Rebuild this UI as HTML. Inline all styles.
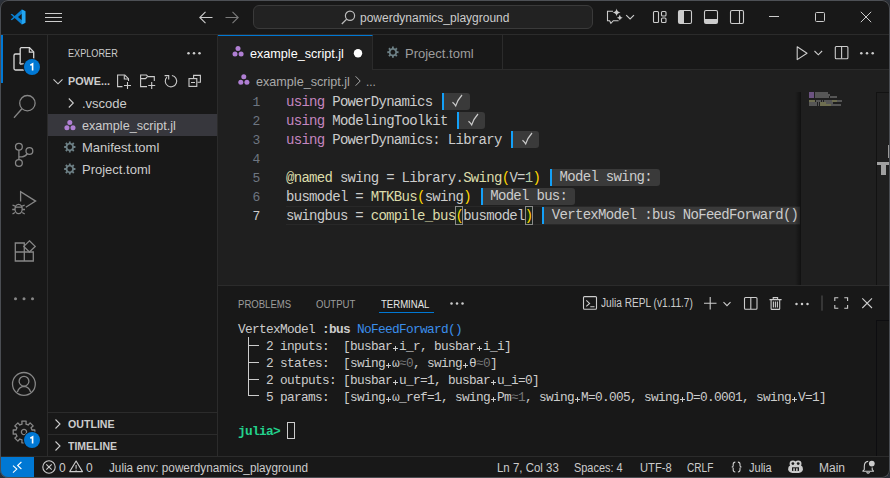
<!DOCTYPE html>
<html><head><meta charset="utf-8">
<style>
html,body{margin:0;padding:0;width:890px;height:478px;overflow:hidden;background:#2b3038;}
*{box-sizing:border-box}
.a{position:absolute}
#win{position:absolute;left:0;top:0;width:890px;height:478px;border-radius:8px;background:#181818;overflow:hidden;font-family:"Liberation Sans",sans-serif;color:#cccccc;}
#frame{position:absolute;left:0;top:0;width:890px;height:478px;border-radius:8px;border:1px solid #4d5055;border-left-color:#4a4d52;border-right-color:#4a4d52;border-bottom-color:#4a4d52;pointer-events:none;}
.ui{position:absolute;font-family:"Liberation Sans",sans-serif;white-space:nowrap;line-height:1;transform-origin:0 0;}
svg{position:absolute;overflow:visible}
.ic{fill:none;stroke:#cccccc;stroke-width:1.1}
.ia{fill:none;stroke:#868686;stroke-width:1.3}
.ed{font-family:"Liberation Mono",monospace;font-size:14px;letter-spacing:-0.7px;line-height:19px;white-space:pre;color:#cccccc;}
.kw{color:#c586c0}
.fn{color:#dcdcaa}
.br{color:#ffd700}
.res{display:inline-block;background:#3a3a3a;border-left:2px solid #13a0f8;height:17px;line-height:17px;vertical-align:top;margin-top:0px;margin-left:9.7px;border-radius:0 3px 3px 0;color:#cccccc}
.ck{display:inline-block;width:26px;height:17px;position:relative}
.term{font-family:"Liberation Mono",monospace;font-size:12.8px;letter-spacing:-0.68px;line-height:17px;white-space:pre;color:#cccccc;}
.sp{display:inline-block;width:7px;height:17px;vertical-align:top;letter-spacing:0;background:linear-gradient(#cccccc,#cccccc) 1px 10px/5px 1px no-repeat,linear-gradient(#cccccc,#cccccc) 3px 8px/1px 5px no-repeat;}
.dim{color:#767676}
.blue{color:#3b8eea}
.grn{color:#23d18b;font-weight:bold}
.sb{font-size:12px;top:462px;color:#cccccc}
</style></head><body>
<div id="win">
  <!-- ============ title bar ============ -->
  <div class="a" style="left:0;top:0;width:890px;height:35px;background:#181818;border-bottom:1px solid #2b2b2b"></div>
  <svg style="left:10px;top:9px" width="16" height="16" viewBox="0 0 100 100">
    <path fill="#0a7fd0" fill-rule="evenodd" d="M74 3 L96 14 V86 L74 97 L29 57 L12 70 L4 65 L22 50 L4 35 L12 30 L29 43 Z M74 29 L50 50 L74 71 Z"/>
    <path fill="#23a6f2" d="M74 3 L96 14 V86 L74 97 Z"/>
  </svg>
  <div class="a" style="left:45px;top:13px;width:17px;height:1px;background:#cccccc"></div>
  <div class="a" style="left:45px;top:17px;width:17px;height:1px;background:#cccccc"></div>
  <div class="a" style="left:45px;top:21px;width:17px;height:1px;background:#cccccc"></div>
  <svg style="left:199px;top:11px" width="14" height="13" viewBox="0 0 14 13"><path d="M13.5 6.5H0.8M6.5 0.8L0.8 6.5L6.5 12.2" fill="none" stroke="#cccccc" stroke-width="1.1"/></svg>
  <svg style="left:225px;top:11px" width="14" height="13" viewBox="0 0 14 13"><path d="M0.5 6.5H13.2M7.5 0.8L13.2 6.5L7.5 12.2" fill="none" stroke="#7a7a7a" stroke-width="1.1"/></svg>
  <div class="a" style="left:253px;top:5px;width:340px;height:24px;border:1px solid #3a3a3a;border-radius:6px;background:#222222"></div>
  <svg style="left:341px;top:10px" width="15" height="15" viewBox="0 0 15 15"><circle cx="9" cy="5.8" r="4.6" fill="none" stroke="#bbbbbb" stroke-width="1.2"/><path d="M5.7 9.1L0.8 14" stroke="#bbbbbb" stroke-width="1.3"/></svg>
  <div class="ui" style="left:360px;top:12px;font-size:12px;color:#cccccc">powerdynamics_playground</div>

  <svg style="left:0;top:0" width="890" height="35" viewBox="0 0 890 35">
    <path d="M613 11.3H607.5V20.7H609.6L610.9 23.3L613.3 20.7H618.6" class="ic" stroke-width="1.1"/>
    <path d="M616.6 8.5Q617.068 11.932 620.5 12.4Q617.068 12.868 616.6 16.3Q616.1320000000001 12.868 612.7 12.4Q616.1320000000001 11.932 616.6 8.5Z" fill="#cccccc"/>
    <path d="M619.8 14.799999999999999Q620.1479999999999 17.352 622.6999999999999 17.7Q620.1479999999999 18.048 619.8 20.599999999999998Q619.452 18.048 616.9 17.7Q619.452 17.352 619.8 14.799999999999999Z" fill="#cccccc"/>
    <path d="M626.2 15.2L630.1 19L634 15.2" class="ic" stroke-width="1.1"/>
  </svg>
  <svg style="left:0;top:0" width="890" height="35" viewBox="0 0 890 35">
    <rect x="653.5" y="11.5" width="5" height="11" rx="1" class="ic" stroke-width="1"/>
    <rect x="661.5" y="11.5" width="4.5" height="4.5" rx="1" class="ic" stroke-width="1"/>
    <rect x="661.5" y="18" width="4.5" height="4.5" rx="1" class="ic" stroke-width="1"/>
    <rect x="678.5" y="10.5" width="13" height="13" rx="1.5" class="ic" stroke-width="1"/>
    <rect x="679" y="11" width="5" height="12" fill="#cccccc"/>
    <rect x="704.5" y="10.5" width="13" height="13" rx="1.5" class="ic" stroke-width="1"/>
    <rect x="705" y="19" width="12" height="4" fill="#cccccc"/>
    <rect x="730.5" y="10.5" width="13" height="13" rx="1.5" class="ic" stroke-width="1"/>
    <path d="M739.5 11V23" class="ic" stroke-width="1"/>
  </svg>
  <div class="a" style="left:769px;top:16px;width:10px;height:1px;background:#cccccc"></div>
  <div class="a" style="left:815px;top:12px;width:10px;height:10px;border:1px solid #cccccc;border-radius:1.5px"></div>
  <svg style="left:860px;top:11px" width="12" height="12" viewBox="0 0 12 12"><path d="M0.8 0.8L11.2 11.2M11.2 0.8L0.8 11.2" stroke="#cccccc" stroke-width="1"/></svg>

  <!-- ============ activity bar ============ -->
  <div class="a" style="left:0;top:35px;width:48px;height:422px;background:#181818;border-right:1px solid #2b2b2b"></div>
  <div class="a" style="left:1px;top:35px;width:2px;height:48px;background:#0078d4"></div>
  <svg style="left:0;top:0" width="48" height="460" viewBox="0 0 48 460">
    <!-- explorer -->
    <path d="M20 54H15.5A1.5 1.5 0 0 0 14 55.5V68.5A1.5 1.5 0 0 0 15.5 70H25" fill="none" stroke="#d7d7d7" stroke-width="1.3"/>
    <path d="M24.5 63.8H21.7A1 1 0 0 1 20.2 62.3V49.3A1.3 1.3 0 0 1 21.5 47.7H29.5L33.7 51.9V60" fill="none" stroke="#d7d7d7" stroke-width="1.3"/>
    <path d="M29.3 47.9V52.1H33.5" fill="none" stroke="#d7d7d7" stroke-width="1.1"/>
    <circle cx="32" cy="67" r="9" fill="#181818"/>
    <circle cx="32" cy="67" r="8" fill="#0078d4"/>
    <path d="M30.3 65.2L32.6 63.9V70.6" fill="none" stroke="#ffffff" stroke-width="1.6"/>
    <!-- search -->
    <circle cx="27.4" cy="103.2" r="7.7" class="ia"/>
    <path d="M21.9 108.7L14 117.8" class="ia" stroke-width="1.5"/>
    <!-- scm -->
    <circle cx="18.9" cy="146.7" r="3.4" class="ia"/>
    <circle cx="18.9" cy="163" r="3.4" class="ia"/>
    <circle cx="29.4" cy="151" r="3.4" class="ia"/>
    <path d="M18.9 150.1V159.6M27.2 153.6Q25.5 156.5 22 156.8H19" class="ia"/>
    <!-- debug -->
    <path d="M20.6 201.5V191.6L35.6 201.1L25.8 207.3" class="ia"/>
    <ellipse cx="18.6" cy="209" rx="3.6" ry="4.6" class="ia"/>
    <path d="M15 207.2H22.2M12.5 205L15 206.2M24.7 205L22.2 206.2M12.2 209.5H15M25 209.5H22.2M12.5 214L15 212.5M24.7 214L22.2 212.5" class="ia" stroke-width="1.1"/>
    <!-- extensions -->
    <path d="M15.3 243H24.3V252H33.3V261H15.3ZM15.3 252H24.3V261" class="ia"/>
    <path d="M29.4 240.8L35.2 246.4L29.4 252L23.8 246.4Z" class="ia"/>
    <!-- more -->
    <circle cx="15.5" cy="298.8" r="1.5" fill="#868686"/><circle cx="24" cy="298.8" r="1.5" fill="#868686"/><circle cx="32.5" cy="298.8" r="1.5" fill="#868686"/>
    <!-- account -->
    <circle cx="23.9" cy="383.9" r="11.4" class="ia"/>
    <circle cx="24" cy="381.2" r="4.9" class="ia"/>
    <path d="M17.4 392Q19 386.6 24 386.4Q29 386.6 30.6 392" class="ia"/>
    <!-- gear -->
    <g transform="translate(24 432)">
      <path d="M-1.98 -7.96 L-2.15 -10.79 L2.15 -10.79 L1.98 -7.96 L4.23 -7.03 L6.11 -9.15 L9.15 -6.11 L7.03 -4.23 L7.96 -1.98 L10.79 -2.15 L10.79 2.15 L7.96 1.98 L7.03 4.23 L9.15 6.11 L6.11 9.15 L4.23 7.03 L1.98 7.96 L2.15 10.79 L-2.15 10.79 L-1.98 7.96 L-4.23 7.03 L-6.11 9.15 L-9.15 6.11 L-7.03 4.23 L-7.96 1.98 L-10.79 2.15 L-10.79 -2.15 L-7.96 -1.98 L-7.03 -4.23 L-9.15 -6.11 L-6.11 -9.15 L-4.23 -7.03Z" class="ia" stroke-width="1.5" stroke-linejoin="round"/>
      <circle cx="0" cy="0" r="2.6" class="ia" stroke-width="1.4"/>
    </g>
    <circle cx="32" cy="440" r="9" fill="#181818"/>
    <circle cx="32" cy="440" r="8" fill="#0078d4"/>
    <path d="M30.3 438.2L32.6 436.9V443.6" fill="none" stroke="#ffffff" stroke-width="1.6"/>
  </svg>

  <!-- ============ sidebar ============ -->
  <div class="a" style="left:48px;top:35px;width:170px;height:422px;background:#181818;border-right:1px solid #2b2b2b"></div>
  <div class="ui" style="left:68px;top:48px;font-size:11px;color:#cccccc;transform:scaleX(0.83)">EXPLORER</div>
  <svg style="left:0;top:0" width="218" height="200" viewBox="0 0 218 200">
    <circle cx="188.5" cy="53.3" r="1.25" fill="#cccccc"/><circle cx="194" cy="53.3" r="1.25" fill="#cccccc"/><circle cx="199.5" cy="53.3" r="1.25" fill="#cccccc"/>
    <path d="M53.5 79.3L58 83.8L62.5 79.3" class="ic"/>
    <!-- new file -->
    <path d="M122.5 86.6H117.6V75H124.8L128.5 78.7V81" class="ic"/>
    <path d="M124.3 75.2V79H128.2M127.5 82V89M124 85.5H131" class="ic"/>
    <!-- new folder -->
    <path d="M147 86.6H140.6V75H146.5L148 76.6H154.3V81" class="ic"/>
    <path d="M140.8 78.6H145.5L147.2 77M151.7 82V89M148.2 85.5H155.2" class="ic"/>
    <!-- refresh -->
    <path d="M166.9 77.1A5.7 5.7 0 1 0 171.9 75.5" class="ic"/>
    <path d="M164.6 75.6H168.7V79.6" class="ic"/>
    <!-- collapse -->
    <path d="M193.6 78V75.4H200.4V82.2H197.5" class="ic"/>
    <rect x="189" y="78.6" width="7.8" height="7.8" class="ic"/>
    <path d="M191 82.5H195" class="ic"/>
    <!-- vscode chevron -->
    <path d="M68.8 98.5L73.3 103L68.8 107.5" class="ic"/>
    <!-- julia -->
    <circle cx="69.8" cy="122.4" r="2.5" fill="#b07fd4"/><circle cx="66.9" cy="127.7" r="2.5" fill="#b07fd4"/><circle cx="73" cy="127.7" r="2.5" fill="#b07fd4"/>
  </svg>
  <div class="a" style="left:48px;top:114px;width:169px;height:22px;background:#37373d"></div>
  <svg style="left:0;top:0" width="218" height="200" viewBox="0 0 218 200">
    <circle cx="69.8" cy="122.4" r="2.5" fill="#b07fd4"/><circle cx="66.9" cy="127.7" r="2.5" fill="#b07fd4"/><circle cx="73" cy="127.7" r="2.5" fill="#b07fd4"/>
    <path transform="translate(69.8 147)" fill="#6d8086" fill-rule="evenodd" d="M-0.88 -4.11 L-0.94 -5.62 L0.94 -5.62 L0.88 -4.11 L2.28 -3.53 L3.31 -4.64 L4.64 -3.31 L3.53 -2.28 L4.11 -0.88 L5.62 -0.94 L5.62 0.94 L4.11 0.88 L3.53 2.28 L4.64 3.31 L3.31 4.64 L2.28 3.53 L0.88 4.11 L0.94 5.62 L-0.94 5.62 L-0.88 4.11 L-2.28 3.53 L-3.31 4.64 L-4.64 3.31 L-3.53 2.28 L-4.11 0.88 L-5.62 0.94 L-5.62 -0.94 L-4.11 -0.88 L-3.53 -2.28 L-4.64 -3.31 L-3.31 -4.64 L-2.28 -3.53Z M0 -2.4A2.4 2.4 0 1 0 0.001 -2.4Z"/><path transform="translate(69.8 169)" fill="#6d8086" fill-rule="evenodd" d="M-0.88 -4.11 L-0.94 -5.62 L0.94 -5.62 L0.88 -4.11 L2.28 -3.53 L3.31 -4.64 L4.64 -3.31 L3.53 -2.28 L4.11 -0.88 L5.62 -0.94 L5.62 0.94 L4.11 0.88 L3.53 2.28 L4.64 3.31 L3.31 4.64 L2.28 3.53 L0.88 4.11 L0.94 5.62 L-0.94 5.62 L-0.88 4.11 L-2.28 3.53 L-3.31 4.64 L-4.64 3.31 L-3.53 2.28 L-4.11 0.88 L-5.62 0.94 L-5.62 -0.94 L-4.11 -0.88 L-3.53 -2.28 L-4.64 -3.31 L-3.31 -4.64 L-2.28 -3.53Z M0 -2.4A2.4 2.4 0 1 0 0.001 -2.4Z"/>
  </svg>
  <div class="ui" style="left:68px;top:76px;font-size:11px;font-weight:bold;color:#cccccc;transform:scaleX(0.98)">POWE...</div>
  <div class="ui" style="left:82px;top:97px;font-size:13px">.vscode</div>
  <div class="ui" style="left:82px;top:119px;font-size:13px;transform:scaleX(0.97)">example_script.jl</div>
  <div class="ui" style="left:82px;top:141px;font-size:13px">Manifest.toml</div>
  <div class="ui" style="left:82px;top:163px;font-size:13px">Project.toml</div>
  <div class="a" style="left:48px;top:412px;width:169px;height:1px;background:#2b2b2b"></div>
  <div class="a" style="left:48px;top:434px;width:169px;height:1px;background:#2b2b2b"></div>
  <svg style="left:0;top:400px" width="218" height="60" viewBox="0 400 218 60">
    <path d="M55.5 419.5L60 424L55.5 428.5M55.5 441.5L60 446L55.5 450.5" class="ic"/>
  </svg>
  <div class="ui" style="left:68px;top:419px;font-size:11px;font-weight:bold;transform:scaleX(0.965)">OUTLINE</div>
  <div class="ui" style="left:68px;top:441px;font-size:11px;font-weight:bold;transform:scaleX(0.955)">TIMELINE</div>

  <!-- ============ editor ============ -->
  <div class="a" style="left:218px;top:35px;width:672px;height:250px;background:#1f1f1f"></div>
  <div class="a" style="left:218px;top:35px;width:672px;height:35px;background:#181818;border-bottom:1px solid #2b2b2b"></div>
  <div class="a" style="left:218px;top:35px;width:155px;height:35px;background:#1f1f1f;border-top:1px solid #0078d4;border-right:1px solid #2b2b2b"></div>
  <div class="a" style="left:373px;top:35px;width:130px;height:34px;border-right:1px solid #2b2b2b"></div>
  <svg style="left:0;top:0" width="890" height="100" viewBox="0 0 890 100">
    <circle cx="238" cy="48.6" r="2.5" fill="#b07fd4"/><circle cx="235" cy="54" r="2.5" fill="#b07fd4"/><circle cx="241.1" cy="54" r="2.5" fill="#b07fd4"/>
    <circle cx="358" cy="53.2" r="4.2" fill="#ffffff"/>
    <path transform="translate(392.9 52.2)" fill="#6d8086" fill-rule="evenodd" d="M-0.88 -4.11 L-0.94 -5.62 L0.94 -5.62 L0.88 -4.11 L2.28 -3.53 L3.31 -4.64 L4.64 -3.31 L3.53 -2.28 L4.11 -0.88 L5.62 -0.94 L5.62 0.94 L4.11 0.88 L3.53 2.28 L4.64 3.31 L3.31 4.64 L2.28 3.53 L0.88 4.11 L0.94 5.62 L-0.94 5.62 L-0.88 4.11 L-2.28 3.53 L-3.31 4.64 L-4.64 3.31 L-3.53 2.28 L-4.11 0.88 L-5.62 0.94 L-5.62 -0.94 L-4.11 -0.88 L-3.53 -2.28 L-4.64 -3.31 L-3.31 -4.64 L-2.28 -3.53Z M0 -2.4A2.4 2.4 0 1 0 0.001 -2.4Z"/>
    <circle cx="243.8" cy="76.8" r="2.5" fill="#b07fd4"/><circle cx="240.8" cy="82.2" r="2.5" fill="#b07fd4"/><circle cx="246.9" cy="82.2" r="2.5" fill="#b07fd4"/>
    <path d="M355.6 76.3L360.2 81L355.6 85.7" fill="none" stroke="#a9a9a9" stroke-width="1"/>
    <!-- run / split / more -->
    <path d="M797.2 46.8V59.6L807 53.2Z" class="ic" stroke-linejoin="round"/>
    <path d="M814.5 51L818.3 54.8L822.1 51" class="ic"/>
    <rect x="835.3" y="46.5" width="12.6" height="12.3" rx="1" class="ic"/>
    <path d="M841.6 46.8V58.6" class="ic"/>
    <circle cx="861.3" cy="53.2" r="1.25" fill="#cccccc"/><circle cx="867" cy="53.2" r="1.25" fill="#cccccc"/><circle cx="872.7" cy="53.2" r="1.25" fill="#cccccc"/>
  </svg>
  <div class="ui" style="left:250px;top:47px;font-size:13px;color:#ffffff;transform:scaleX(0.97)">example_script.jl</div>
  <div class="ui" style="left:405px;top:47px;font-size:13px;color:#9d9d9d">Project.toml</div>
  <div class="ui" style="left:256px;top:75px;font-size:13px;color:#a9a9a9;transform:scaleX(0.97)">example_script.jl</div>
  <div class="ui" style="left:366px;top:75px;font-size:13px;color:#a9a9a9;transform:scaleX(0.9)">...</div>

  <!-- line numbers -->
  <div class="a ed" style="left:240px;top:92.5px;width:20px;text-align:right;color:#6e7681;font-size:13px;letter-spacing:-0.4px">1
2
3
4
5
6
<span style="color:#cccccc">7</span></div>
  <div class="a" style="left:286px;top:206px;width:514px;height:19px;border:1px solid #282828;border-left:none;border-right:none"></div>
  <div class="a" style="left:455px;top:206px;width:8px;height:19px;border:1px solid #8a8a8a;background:rgba(0,100,0,0.1)"></div>
  <div class="a" style="left:525px;top:206px;width:8px;height:19px;border:1px solid #8a8a8a;background:rgba(0,100,0,0.1)"></div>
  <div class="a ed" style="left:286px;top:93px"><span class="kw">using</span> PowerDynamics<span class="res"><span class="ck"></span></span>
<span class="kw">using</span> ModelingToolkit<span class="res"><span class="ck"></span></span>
<span class="kw">using</span> PowerDynamics: Library<span class="res"><span class="ck"></span></span>

<span class="fn">@named</span> swing = Library.<span class="fn">Swing</span><span class="br">(</span>V=<span style="color:#b5cea8">1</span><span class="br">)</span><span class="res"> Model swing: </span>
busmodel = <span class="fn">MTKBus</span><span class="br">(</span>swing<span class="br">)</span><span class="res"> Model bus: </span>
swingbus = <span class="fn">compile_bus</span><span class="br">(</span>busmodel<span class="br">)</span><span class="res"> VertexModel :bus NoFeedForward() </span></div>
  <svg style="left:0;top:0" width="890" height="200" viewBox="0 0 890 200">
    <path d="M452.5 102.3Q454.3 103.8 455.7 105.9Q457.5 100 462.0 95" fill="none" stroke="#cccccc" stroke-width="1.2"/>
    <path d="M468.5 121.3Q470.3 122.8 471.7 124.9Q473.5 119 478.0 114" fill="none" stroke="#cccccc" stroke-width="1.2"/>
    <path d="M522.5 140.3Q524.3 141.8 525.7 143.9Q527.5 138 532.0 133" fill="none" stroke="#cccccc" stroke-width="1.2"/>
  </svg>

  <!-- minimap -->
  <div class="a" style="left:800px;top:92px;width:76px;height:193px;background:#1f1f1f"></div>
  <div class="a" style="left:795px;top:92px;width:6px;height:193px;background:linear-gradient(90deg,rgba(0,0,0,0),rgba(0,0,0,0.45))"></div>
  <div class="a" style="left:876px;top:92px;width:1px;height:193px;background:#121212"></div>
  <div class="a" style="left:876px;top:92px;width:14px;height:1px;background:#121212"></div>
  <div class="a" style="left:809px;top:92px;width:5px;height:2px;background:#80609a;opacity:0.8"></div>
  <div class="a" style="left:815px;top:92px;width:13px;height:2px;background:#7c7c7c;opacity:0.6"></div>
  <div class="a" style="left:809px;top:94px;width:5px;height:2px;background:#80609a;opacity:0.8"></div>
  <div class="a" style="left:815px;top:94px;width:15px;height:2px;background:#7c7c7c;opacity:0.6"></div>
  <div class="a" style="left:809px;top:96px;width:5px;height:2px;background:#80609a;opacity:0.8"></div>
  <div class="a" style="left:815px;top:96px;width:14px;height:2px;background:#7c7c7c;opacity:0.6"></div>
  <div class="a" style="left:830px;top:96px;width:7px;height:2px;background:#7c7c7c;opacity:0.6"></div>
  <div class="a" style="left:809px;top:100px;width:6px;height:2px;background:#8a8a62;opacity:0.75"></div>
  <div class="a" style="left:816px;top:100px;width:5px;height:2px;background:#7c7c7c;opacity:0.6"></div>
  <div class="a" style="left:822px;top:100px;width:1px;height:2px;background:#7c7c7c;opacity:0.6"></div>
  <div class="a" style="left:824px;top:100px;width:8px;height:2px;background:#7c7c7c;opacity:0.6"></div>
  <div class="a" style="left:832px;top:100px;width:5px;height:2px;background:#8a8a62;opacity:0.75"></div>
  <div class="a" style="left:837px;top:100px;width:5px;height:2px;background:#7c7c7c;opacity:0.6"></div>
  <div class="a" style="left:809px;top:102px;width:8px;height:2px;background:#7c7c7c;opacity:0.6"></div>
  <div class="a" style="left:818px;top:102px;width:1px;height:2px;background:#7c7c7c;opacity:0.6"></div>
  <div class="a" style="left:820px;top:102px;width:6px;height:2px;background:#8a8a62;opacity:0.75"></div>
  <div class="a" style="left:826px;top:102px;width:7px;height:2px;background:#7c7c7c;opacity:0.6"></div>
  <div class="a" style="left:809px;top:104px;width:8px;height:2px;background:#7c7c7c;opacity:0.6"></div>
  <div class="a" style="left:818px;top:104px;width:1px;height:2px;background:#7c7c7c;opacity:0.6"></div>
  <div class="a" style="left:820px;top:104px;width:11px;height:2px;background:#8a8a62;opacity:0.75"></div>
  <div class="a" style="left:831px;top:104px;width:10px;height:2px;background:#7c7c7c;opacity:0.6"></div>
  <div class="a" style="left:877px;top:162px;width:12px;height:3px;background:#a0a0a0"></div>
  <div class="a" style="left:881px;top:165px;width:5px;height:10px;background:#a0a0a0"></div>
  <div class="a" style="left:888px;top:145px;width:2px;height:13px;background:#9a9a9a"></div>

  <!-- ============ panel ============ -->
  <div class="a" style="left:218px;top:285px;width:672px;height:172px;background:#181818;border-top:1px solid #2b2b2b"></div>
  <div class="ui" style="left:238px;top:299px;font-size:11px;color:#9d9d9d;transform:scaleX(0.87)">PROBLEMS</div>
  <div class="ui" style="left:316px;top:299px;font-size:11px;color:#9d9d9d;transform:scaleX(0.87)">OUTPUT</div>
  <div class="ui" style="left:381px;top:299px;font-size:11px;color:#e7e7e7;transform:scaleX(0.87)">TERMINAL</div>
  <div class="a" style="left:379px;top:312px;width:55px;height:1px;background:#0078d4"></div>
  <svg style="left:0;top:0" width="890" height="320" viewBox="0 0 890 320">
    <circle cx="451.5" cy="303.5" r="1.25" fill="#cccccc"/><circle cx="457" cy="303.5" r="1.25" fill="#cccccc"/><circle cx="462.5" cy="303.5" r="1.25" fill="#cccccc"/>
    <rect x="583.5" y="296.6" width="13" height="12.6" rx="1" class="ic" stroke-width="1.05"/>
    <path d="M586.3 300.4L589.6 303.4L586.3 306.4M590.3 306.8H594.5" class="ic" stroke-width="1.05"/>
    <path d="M710.2 297V309.5M704 303.2H716.5" class="ic" stroke-width="1.2"/>
    <path d="M723.5 302.2L727 305.7L730.5 302.2" class="ic"/>
    <rect x="744.5" y="297.5" width="12.5" height="11.8" rx="1" class="ic"/>
    <path d="M750.8 297.7V309" class="ic"/>
    <path d="M769.5 299.6H781.6M773.2 299.4V297.6H777.6V299.4M771.1 299.8V308.7Q771.1 309.4 771.8 309.4H779Q779.7 309.4 779.7 308.7V299.8M773.4 301.5V307.6M775.4 301.5V307.6M777.4 301.5V307.6" class="ic" stroke-width="1"/>
    <circle cx="796.5" cy="304" r="1.25" fill="#cccccc"/><circle cx="802" cy="304" r="1.25" fill="#cccccc"/><circle cx="807.5" cy="304" r="1.25" fill="#cccccc"/>
    <path d="M822 295.5V310.7" stroke="#555555" stroke-width="1"/>
    <path d="M834.8 301V297.7H838.3M844.3 297.7H847.6V301M847.6 305V308.3H844.3M838.3 308.3H834.8V305" class="ic"/>
    <path d="M862.3 298.3L872 308M872 298.3L862.3 308" class="ic"/>
  </svg>
  <div class="ui" style="left:601px;top:297px;font-size:12px;color:#cccccc;transform:scaleX(0.845)">Julia REPL (v1.11.7)</div>
  <div class="a term" style="left:238px;top:321px">VertexModel <b>:bus</b> <span class="blue">NoFeedForward()</span>
    2 inputs:  [busbar<i class="sp"></i>i_r, busbar<i class="sp"></i>i_i]
    2 states:  [swing<i class="sp"></i>ω<span class="dim">≈0</span>, swing<i class="sp"></i>θ<span class="dim">≈0</span>]
    2 outputs: [busbar<i class="sp"></i>u_r=1, busbar<i class="sp"></i>u_i=0]
    5 params:  [swing<i class="sp"></i>ω_ref=1, swing<i class="sp"></i>Pm<span class="dim">≈1</span>, swing<i class="sp"></i>M=0.005, swing<i class="sp"></i>D=0.0001, swing<i class="sp"></i>V=1]

<span class="grn">julia&gt;</span> </div>
  <div class="a" style="left:248px;top:337px;width:1px;height:59px;background:#cccccc"></div>
  <div class="a" style="left:248px;top:345px;width:11px;height:1px;background:#cccccc"></div>
  <div class="a" style="left:248px;top:362px;width:11px;height:1px;background:#cccccc"></div>
  <div class="a" style="left:248px;top:379px;width:11px;height:1px;background:#cccccc"></div>
  <div class="a" style="left:248px;top:395px;width:11px;height:1px;background:#cccccc"></div>
  <div class="a" style="left:287px;top:422px;width:8px;height:17px;border:1px solid #cccccc"></div>

  <div class="a" style="left:876px;top:320px;width:14px;height:1px;background:#0d0d10"></div>
  <div class="a" style="left:876px;top:320px;width:1px;height:136px;background:#0d0d10"></div>

  <!-- ============ status bar ============ -->
  <div class="a" style="left:0;top:456px;width:890px;height:22px;background:#181818;border-top:1px solid #2b2b2b"></div>
  <div class="a" style="left:0;top:457px;width:34px;height:21px;background:#0078d4"></div>
  <svg style="left:0;top:0" width="890" height="478" viewBox="0 0 890 478">
    <path d="M13 465.6L16.8 469.1L13 472.6M21.4 462L17.6 465.5L21.4 469" fill="none" stroke="#ffffff" stroke-width="1.1"/>
    <circle cx="49" cy="467" r="6.2" class="ic"/>
    <path d="M46.3 464.3L51.7 469.7M51.7 464.3L46.3 469.7" class="ic"/>
    <path d="M76.1 461L82.5 471.6H69.7Z" class="ic" stroke-linejoin="round"/>
    <path d="M76.1 465V468.8M76.1 469.8V470.8" class="ic"/>
    <path d="M735.3 462.1Q733.2 462.1 733.2 464.2V465.8Q733.2 467 731.7 467Q733.2 467 733.2 468.2V469.8Q733.2 472 735.3 472M737.9 462.1Q740 462.1 740 464.2V465.8Q740 467 741.5 467Q740 467 740 468.2V469.8Q740 472 737.9 472" class="ic" stroke-width="1.3"/>
    <path d="M790.5 465.6H800.6Q802.9 466 802.9 469.2Q802.9 473.1 795.55 473.1Q788.2 473.1 788.2 469.2Q788.2 466 790.5 465.6Z" fill="#cccccc"/>
    <circle cx="792.9" cy="463.8" r="3.3" fill="#cccccc"/><circle cx="798.2" cy="463.8" r="3.3" fill="#cccccc"/>
    <circle cx="792.9" cy="463.6" r="1.4" fill="#181818"/><circle cx="798.2" cy="463.6" r="1.4" fill="#181818"/>
    <rect x="792" y="467.3" width="7" height="3.6" fill="#181818"/>
    <rect x="793.3" y="468.3" width="1.5" height="2.6" fill="#cccccc"/><rect x="796.1" y="468.3" width="1.5" height="2.6" fill="#cccccc"/>
    <path d="M868.2 461.4Q864.3 461.6 864.3 466.5V469.5L862.8 471.2H873.5L872.2 469.5V467.6" class="ic" stroke-width="1.45" stroke-linejoin="round"/>
    <path d="M866.6 472.2Q868.1 474.2 869.6 472.2" class="ic" stroke-width="1.4"/>
    <circle cx="871.8" cy="463.6" r="2.9" fill="#cccccc"/>
  </svg>
  <div class="ui sb" style="left:59px">0</div>
  <div class="ui sb" style="left:86px">0</div>
  <div class="ui sb" style="left:109px;transform:scaleX(0.978)">Julia env: powerdynamics_playground</div>
  <div class="ui sb" style="left:497px;transform:scaleX(0.955)">Ln 7, Col 33</div>
  <div class="ui sb" style="left:574px;transform:scaleX(0.91)">Spaces: 4</div>
  <div class="ui sb" style="left:640px;transform:scaleX(0.93)">UTF-8</div>
  <div class="ui sb" style="left:687px;transform:scaleX(0.84)">CRLF</div>
  <div class="ui sb" style="left:749px;transform:scaleX(0.92)">Julia</div>
  <div class="ui sb" style="left:819px">Main</div>
</div>
<div id="frame"></div>
</body></html>
